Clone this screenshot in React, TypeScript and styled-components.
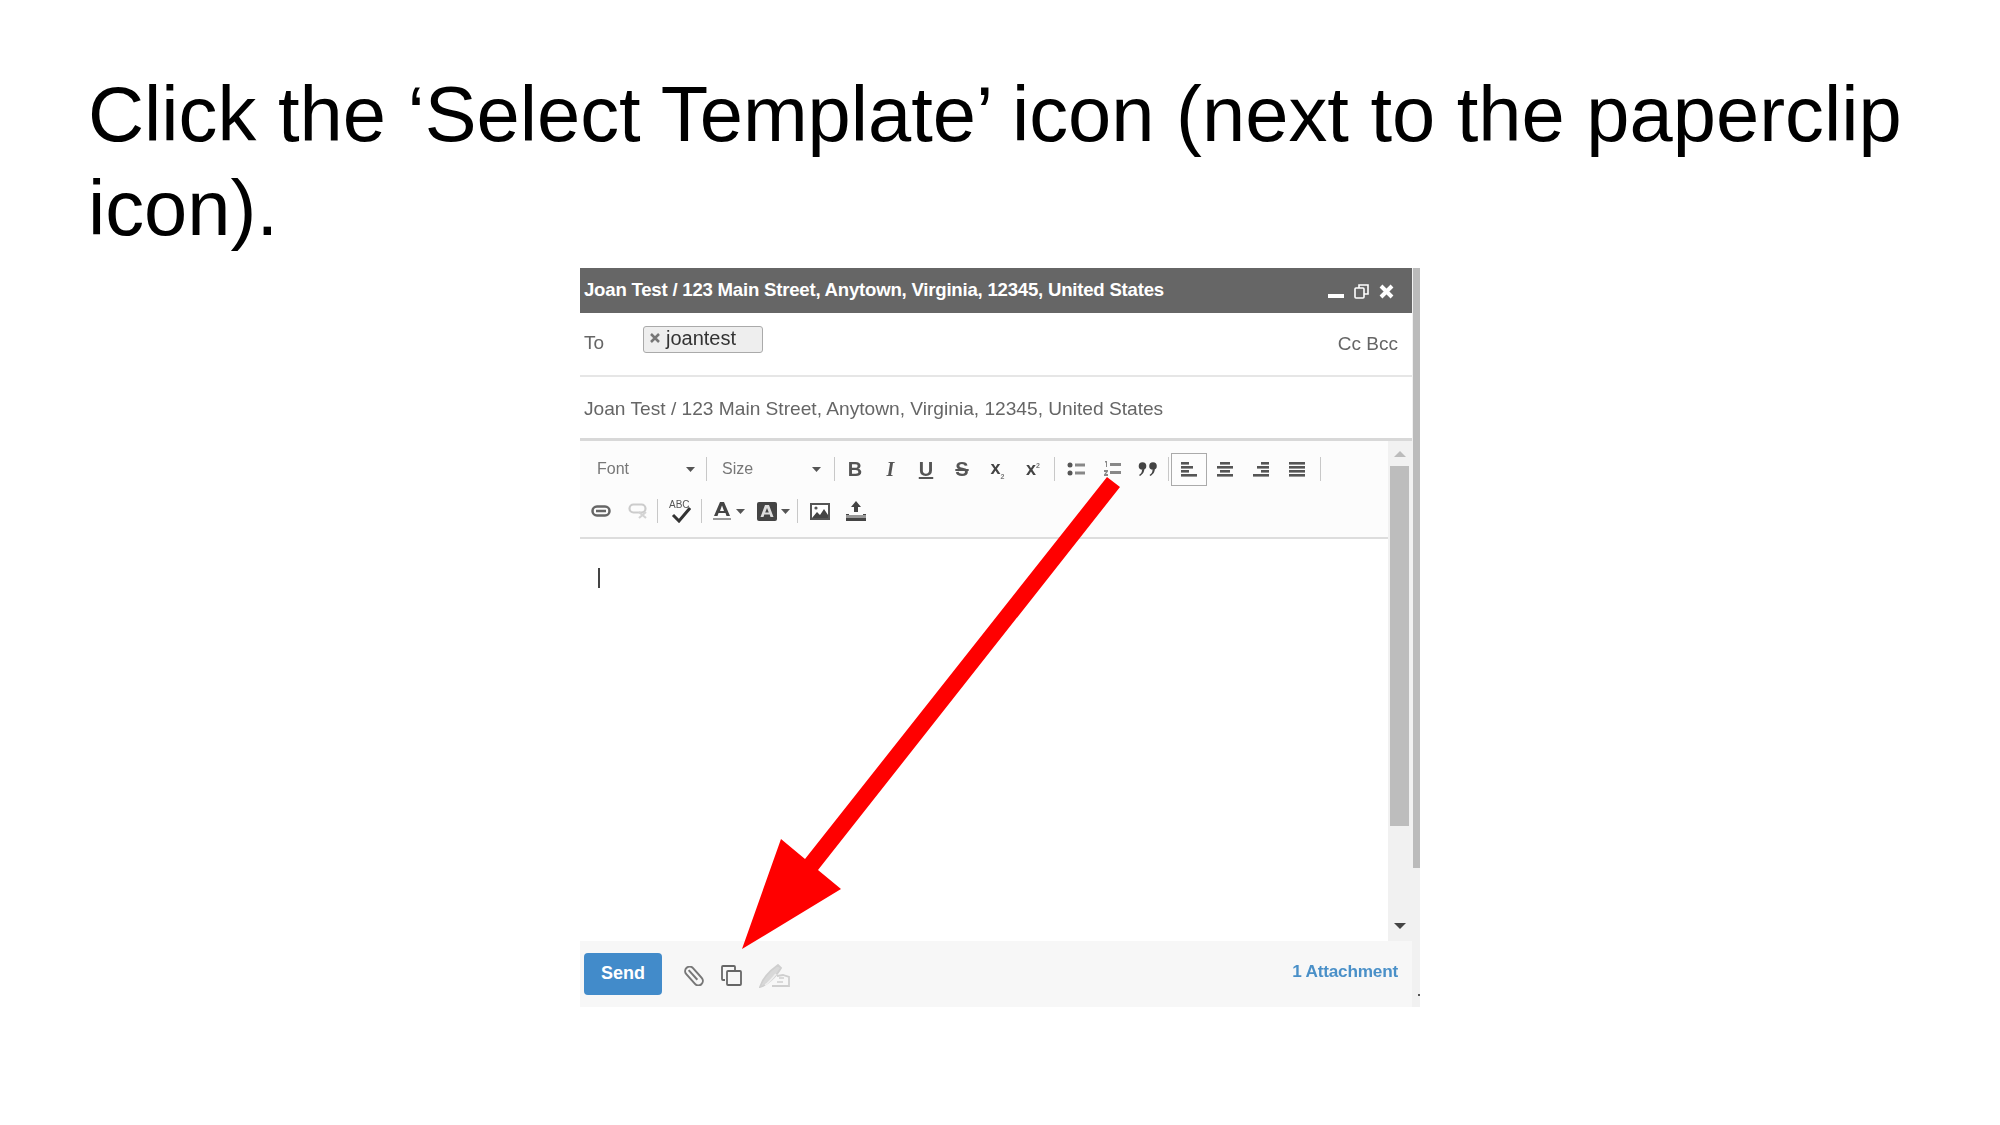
import React from 'react';
import styled, { createGlobalStyle } from 'styled-components';

const GlobalStyle = createGlobalStyle`
  html, body {
    margin: 0;
    padding: 0;
    background: #fff;
    font-family: "Liberation Sans", Arial, sans-serif;
  }
`;

const Page = styled.div`
  position: relative;
  width: 2000px;
  height: 1125px;
  overflow: hidden;
  background: #fff;
`;

const Heading = styled.h1`
  margin: 0;
  padding: 67px 60px 0 88px;
  height: 268px;
  box-sizing: border-box;
  font-size: 77.7px;
  line-height: 94px;
  font-weight: 400;
  color: #000;
`;

const Frame = styled.div`
  display: flex;
  width: 840px;
  height: 739px;
  margin-left: 580px;
  filter: blur(0.5px);
`;

const Compose = styled.div`
  display: flex;
  flex-direction: column;
  width: 832px;
`;

const OuterScroll = styled.div`
  width: 8px;
  background: #f1f1f1;
  display: flex;
  flex-direction: column;
`;

const OuterThumb = styled.div`
  width: 7px;
  height: 600px;
  margin-left: 1px;
  background: #bbb;
`;

const OuterDot = styled.div`
  width: 2px;
  height: 2px;
  margin: 126px 0 0 6px;
  background: #555;
`;

const TitleBar = styled.div`
  display: flex;
  align-items: center;
  justify-content: space-between;
  height: 45px;
  box-sizing: border-box;
  padding: 0 18px 2px 4px;
  background: #666;
  color: #fff;
  font-size: 18.6px;
  font-weight: 700;
  letter-spacing: -0.22px;
`;

const WindowButtons = styled.div`
  display: flex;
  align-items: center;
  gap: 10px;
  margin-top: 3px;
`;

const ToRow = styled.div`
  display: flex;
  height: 64px;
  box-sizing: border-box;
  padding: 13px 14px 0 4px;
  border-bottom: 2px solid #e6e6e6;
  color: #666;
  font-size: 19px;
`;

const ToLabel = styled.span`
  width: 59px;
  margin-top: 6px;
`;

const Chip = styled.div`
  display: flex;
  align-items: center;
  gap: 6px;
  width: 120px;
  height: 27px;
  box-sizing: border-box;
  padding: 0 0 3px 6px;
  background: #eee;
  border: 1px solid #aaa;
  border-radius: 3px;
  color: #333;
  font-size: 20px;
`;

const CcBcc = styled.span`
  margin-left: auto;
  margin-top: 7px;
`;

const SubjectRow = styled.div`
  display: flex;
  align-items: center;
  height: 64px;
  box-sizing: border-box;
  padding: 2px 4px 0;
  border-bottom: 3px solid #d8d8d8;
  color: #666;
  font-size: 19.15px;
`;

const EditorArea = styled.div`
  display: flex;
  height: 500px;
`;

const EditorMain = styled.div`
  flex: 1;
  display: flex;
  flex-direction: column;
`;

const Toolbar = styled.div`
  height: 98px;
  box-sizing: border-box;
  padding: 10px 0 0 0;
  background: #fcfcfc;
  border-bottom: 2px solid #ddd;
`;

const ToolRow = styled.div<{ $pad: number }>`
  display: flex;
  align-items: center;
  height: 36px;
  margin-bottom: 6px;
  padding-left: ${p => p.$pad}px;
`;

const Dropdown = styled.div<{ $w: number; $left?: number; $right: number }>`
  display: flex;
  align-items: center;
  justify-content: space-between;
  width: ${p => p.$w}px;
  box-sizing: border-box;
  padding: 0 ${p => p.$right}px 0 ${p => p.$left ?? 0}px;
  color: #777;
  font-size: 16px;
`;

const Sep = styled.span<{ $gap?: number }>`
  display: block;
  width: 1px;
  height: 24px;
  background: #c8c8c8;
  margin: 0 ${p => p.$gap ?? 2}px;
`;

const ToolButton = styled.span<{ $active?: boolean; $w?: number }>`
  display: flex;
  align-items: center;
  justify-content: center;
  box-sizing: border-box;
  width: ${p => p.$w ?? 36}px;
  height: 33px;
  border: ${p => (p.$active ? '1px solid #aaa' : 'none')};
  flex: none;
`;

const ColorButton = styled.span<{ $w: number; $pad: number; $gap: number }>`
  display: flex;
  align-items: center;
  box-sizing: border-box;
  width: ${p => p.$w}px;
  padding-left: ${p => p.$pad}px;
  gap: ${p => p.$gap}px;
  flex: none;
`;

const Letter = styled.span<{ $italic?: boolean; $under?: boolean; $strike?: boolean }>`
  color: #555;
  font-family: ${p => (p.$italic ? '"Liberation Serif", serif' : '"Liberation Sans", sans-serif')};
  font-size: 20px;
  font-weight: 700;
  font-style: ${p => (p.$italic ? 'italic' : 'normal')};
  text-decoration: ${p => (p.$under ? 'underline' : p.$strike ? 'line-through' : 'none')};
`;

const Script = styled.span`
  color: #444;
  font-size: 18px;
  font-weight: 700;
  sub, sup {
    font-size: 7px;
    color: #777;
  }
`;

const Body = styled.div`
  flex: 1;
  padding: 29px 0 0 18px;
  background: #fff;
`;

const TextCaret = styled.div`
  width: 2px;
  height: 20px;
  background: #444;
`;

const InnerScroll = styled.div`
  display: flex;
  flex-direction: column;
  align-items: center;
  width: 24px;
  background: #f1f1f1;
`;

const ArrowCap = styled.div<{ $down?: boolean }>`
  display: flex;
  align-items: center;
  justify-content: center;
  height: 25px;
  width: 100%;
  margin-bottom: ${p => (p.$down ? '3px' : '0')};
  svg {
    transform: ${p => (p.$down ? 'rotate(180deg)' : 'none')};
  }
`;

const InnerThumb = styled.div`
  width: 19px;
  height: 360px;
  background: #bdbdbd;
  margin-right: 2px;
`;

const InnerGap = styled.div`
  flex: 1;
`;

const Footer = styled.div`
  display: flex;
  align-items: center;
  flex: 1;
  padding: 0 14px 0 4px;
  background: #f7f7f7;
`;

const SendButton = styled.button`
  width: 78px;
  height: 42px;
  border: none;
  border-radius: 4px;
  background: #428bca;
  color: #fff;
  font-family: "Liberation Sans", sans-serif;
  font-size: 18px;
  font-weight: 700;
  padding: 0 0 2px;
`;

const FooterIcons = styled.div`
  display: flex;
  align-items: center;
  margin-left: 22px;
  gap: 17px;
  margin-top: 3px;
`;

const AttachLink = styled.span`
  margin-left: auto;
  margin-bottom: 6px;
  color: #4a90c8;
  font-size: 17.2px;
  font-weight: 700;
  letter-spacing: -0.2px;
`;

const ArrowOverlay = styled.svg`
  position: absolute;
  left: 0;
  top: 0;
  pointer-events: none;
`;

const Caret = () => (
  <svg width="9" height="5" viewBox="0 0 9 5"><path d="M0 0h9L4.500 5z" fill="#555" /></svg>
);

const ScrollTriangle = ({ color }: { color: string }) => (
  <svg width="12" height="6" viewBox="0 0 12 6"><path d="M6 0l6 6H0z" fill={color} /></svg>
);

const BulletList = () => (
  <svg width="18" height="14" viewBox="0 0 18 14" fill="#555">
    <circle cx="3" cy="3" r="2.500" /><circle cx="3" cy="11" r="2.500" />
    <path d="M8 1.500h10v3H8zM8 9.500h10v3H8z" fill="#888" />
  </svg>
);

const NumberList = () => (
  <svg width="18" height="16" viewBox="0 0 18 16" fill="#888">
    <path d="M2 0h2v6H3V1.500H2zM1 9h4v1.500L3 13h2v2H1v-1.500L3 11H1z" />
    <path d="M7 2h11v3H7zM7 10h11v3H7z" />
  </svg>
);

const Quote = () => (
  <svg width="20" height="14" viewBox="0 0 20 14" fill="#444">
    <circle cx="4.500" cy="4" r="3.800" /><circle cx="15" cy="4" r="3.800" />
    <path d="M6 6c1 3-1 6-4 8l-1-1c2-1 3-3 3-5zM16.500 6c1 3-1 6-4 8l-1-1c2-1 3-3 3-5z" />
  </svg>
);

const aligned: Record<string, number[][]> = {
  left: [[0, 8], [0, 12], [0, 8], [0, 16]],
  center: [[3, 10], [0, 16], [3, 10], [0, 16]],
  right: [[8, 8], [4, 12], [8, 8], [0, 16]],
  justify: [[0, 16], [0, 16], [0, 16], [0, 16]],
};

const Align = ({ mode }: { mode: string }) => (
  <svg width="16" height="15" viewBox="0 0 16 15" fill="#555">
    {aligned[mode].map(([x, w], i) => (
      <rect key={i} x={x} y={i * 4} width={w} height="2.600" />
    ))}
  </svg>
);

const LinkIcon = () => (
  <svg width="20" height="12" viewBox="0 0 20 12" fill="none" stroke="#666" strokeWidth="2.500">
    <rect x="1.500" y="1.500" width="17" height="9" rx="4.500" />
    <path d="M5 6h10" />
  </svg>
);

const UnlinkIcon = () => (
  <svg width="20" height="16" viewBox="0 0 20 16" fill="none" stroke="#ccc" strokeWidth="2.200">
    <rect x="1.500" y="1.500" width="16" height="8" rx="4" />
    <path d="M11 9l7 6M18 9l-7 6" stroke="#d4d4d4" />
  </svg>
);

const SpellCheck = () => (
  <svg width="22" height="24" viewBox="0 0 22 24" fill="none">
    <text x="0" y="9" fontFamily="Liberation Sans" fontSize="10" fill="#555">ABC</text>
    <path d="M4 16l6 6L21 9" stroke="#333" strokeWidth="3" />
  </svg>
);

const TextColor = () => (
  <svg width="18" height="20" viewBox="0 0 18 20">
    <path d="M7 1h4l6 14h-3.500l-1-3h-7l-1 3H1zM9 4.500L7 10h4z" fill="#444" />
    <rect x="0" y="17" width="18" height="2" fill="#999" />
  </svg>
);

const BackColor = () => (
  <svg width="20" height="19" viewBox="0 0 20 19">
    <rect width="20" height="19" rx="2" fill="#444" />
    <path d="M8 3h4l4.500 12h-3l-.8-2.500H7.300L6.500 15h-3zM10 6l-1.800 4.500h3.600z" fill="#ddd" />
  </svg>
);

const ImageIcon = () => (
  <svg width="20" height="17" viewBox="0 0 20 17">
    <rect x="1" y="1" width="18" height="15" fill="#fff" stroke="#555" strokeWidth="2" />
    <path d="M2 15l5-6 3 3 4-6 4 6v3z" fill="#444" />
    <circle cx="6" cy="5" r="1.600" fill="#555" />
  </svg>
);

const UploadIcon = () => (
  <svg width="20" height="20" viewBox="0 0 20 20" fill="#444">
    <path d="M10 0l5 6h-3v5H8V6H5z" />
    <path d="M0 13h3v4h14v-4h3v7H0z" />
    <rect x="0" y="14" width="20" height="3" fill="#999" />
  </svg>
);

const Paperclip = () => (
  <svg width="20" height="20" viewBox="0 0 20 20" fill="none" stroke="#777" strokeWidth="2">
    <g transform="rotate(-42 10 10)">
      <rect x="5.500" y="-1" width="9" height="22" rx="4.500" />
      <path d="M10 2v13" />
    </g>
  </svg>
);

const TemplateIcon = () => (
  <svg width="21" height="21" viewBox="0 0 21 21" fill="none" stroke="#666" strokeWidth="1.800">
    <path d="M4 15H2a1 1 0 0 1-1-1V2a1 1 0 0 1 1-1h11a1 1 0 0 1 1 1v3" />
    <rect x="6" y="6" width="14" height="14" rx="1" />
  </svg>
);

// hand holding a pen, greyed out
const SignatureIcon = () => (
  <svg width="31" height="24" viewBox="0 0 31 24" fill="none" stroke="#cfcfcf" strokeWidth="1.800">
    <path d="M1 23C3 16 9 8 19 1l3 3C18 11 11 18 4 22z" fill="#d8d8d8" />
    <path d="M6 21C9 19 13 15 17 10" stroke="#eee" />
    <path d="M13 22h17v-9l-6-2-6 1" />
    <path d="M20 14h5M18 18h6" strokeWidth="1.400" />
  </svg>
);

const App: React.FC = () => (
  <Page>
    <GlobalStyle />
    <Heading>Click the ‘Select Template’ icon (next to the paperclip icon).</Heading>
    <Frame>
      <Compose>
        <TitleBar>
          <span>Joan Test / 123 Main Street, Anytown, Virginia, 12345, United States</span>
          <WindowButtons>
            <svg width="16" height="14" viewBox="0 0 16 14"><rect y="10" width="16" height="4" fill="#fff" /></svg>
            <svg width="15" height="15" viewBox="0 0 15 15" fill="none" stroke="#fff" strokeWidth="1.600">
              <rect x="1" y="4" width="9" height="10" rx="1" /><path d="M5 4V1h9v9h-4" />
            </svg>
            <svg width="15" height="15" viewBox="0 0 15 15" stroke="#fff" strokeWidth="4"><path d="M2 2l11 11M13 2L2 13" /></svg>
          </WindowButtons>
        </TitleBar>
        <ToRow>
          <ToLabel>To</ToLabel>
          <Chip>
            <svg width="10" height="10" viewBox="0 0 10 10" stroke="#777" strokeWidth="2.500"><path d="M1 1l8 8M9 1L1 9" /></svg>
            joantest
          </Chip>
          <CcBcc>Cc Bcc</CcBcc>
        </ToRow>
        <SubjectRow>Joan Test / 123 Main Street, Anytown, Virginia, 12345, United States</SubjectRow>
        <EditorArea>
          <EditorMain>
            <Toolbar>
              <ToolRow $pad={17}>
                <Dropdown $w={109} $right={11}>Font<Caret /></Dropdown>
                <Sep $gap={0} />
                <Dropdown $w={125} $left={15} $right={11}>Size<Caret /></Dropdown>
                <Sep />
                <ToolButton><Letter>B</Letter></ToolButton>
                <ToolButton $w={35}><Letter $italic>I</Letter></ToolButton>
                <ToolButton><Letter $under>U</Letter></ToolButton>
                <ToolButton><Letter $strike>S</Letter></ToolButton>
                <ToolButton $w={35}><Script>x<sub>2</sub></Script></ToolButton>
                <ToolButton><Script>x<sup>2</sup></Script></ToolButton>
                <Sep $gap={3} />
                <ToolButton><BulletList /></ToolButton>
                <ToolButton><NumberList /></ToolButton>
                <ToolButton><Quote /></ToolButton>
                <Sep $gap={2} />
                <ToolButton $active><Align mode="left" /></ToolButton>
                <ToolButton><Align mode="center" /></ToolButton>
                <ToolButton><Align mode="right" /></ToolButton>
                <ToolButton><Align mode="justify" /></ToolButton>
                <Sep $gap={5} />
              </ToolRow>
              <ToolRow $pad={2}>
                <ToolButton $w={37}><LinkIcon /></ToolButton>
                <ToolButton $w={37}><UnlinkIcon /></ToolButton>
                <Sep $gap={1} />
                <ToolButton $w={41}><SpellCheck /></ToolButton>
                <Sep $gap={1} />
                <ColorButton $w={46} $pad={10} $gap={5}><TextColor /><Caret /></ColorButton>
                <ColorButton $w={47} $pad={8} $gap={4}><BackColor /><Caret /></ColorButton>
                <Sep $gap={1} />
                <ToolButton $w={41}><ImageIcon /></ToolButton>
                <ToolButton $w={32}><UploadIcon /></ToolButton>
              </ToolRow>
            </Toolbar>
            <Body><TextCaret /></Body>
          </EditorMain>
          <InnerScroll>
            <ArrowCap><ScrollTriangle color="#bbb" /></ArrowCap>
            <InnerThumb />
            <InnerGap />
            <ArrowCap $down><ScrollTriangle color="#444" /></ArrowCap>
          </InnerScroll>
        </EditorArea>
        <Footer>
          <SendButton>Send</SendButton>
          <FooterIcons>
            <Paperclip />
            <TemplateIcon />
            <SignatureIcon />
          </FooterIcons>
          <AttachLink>1 Attachment</AttachLink>
        </Footer>
      </Compose>
      <OuterScroll>
        <OuterThumb />
        <OuterDot />
      </OuterScroll>
    </Frame>
    <ArrowOverlay width="2000" height="1125" viewBox="0 0 2000 1125">
      <polygon points="1107,477 1120,487 818,870 841,889 742,949 781,839 805,859" fill="#ff0000" />
    </ArrowOverlay>
  </Page>
);

export default App;
